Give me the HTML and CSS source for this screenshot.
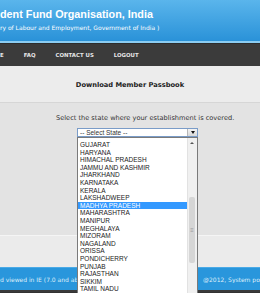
FILE: index.html
```html
<!DOCTYPE html>
<html lang="en">
<head>
    <meta charset="UTF-8">
    <meta name="viewport" content="width=device-width, initial-scale=1.0">
    <title>Download Member Passbook</title>
    <link rel="stylesheet" href="styles.css">
</head>
<body>
    <div class="header">
        <div class="site-title">dent Fund Organisation, India</div>
        <div class="site-sub">ry of Labour and Employment, Government of India )</div>
    </div>

    <div class="nav">
        <span class="nav-item">E</span>
        <span class="nav-item">FAQ</span>
        <span class="nav-item">CONTACT US</span>
        <span class="nav-item">LOGOUT</span>
    </div>

    <div class="page-title">Download Member Passbook</div>

    <div class="content">
        <p class="hint">Select the state where your establishment is covered.</p>
        <div class="select">
            <span class="select-text">-- Select State --</span>
            <span class="select-btn"><span class="arrow"></span></span>

            <div class="dropdown">
                <ul class="options">
                    <li>GUJARAT</li>
                    <li>HARYANA</li>
                    <li>HIMACHAL PRADESH</li>
                    <li>JAMMU AND KASHMIR</li>
                    <li>JHARKHAND</li>
                    <li>KARNATAKA</li>
                    <li>KERALA</li>
                    <li>LAKSHADWEEP</li>
                    <li class="selected">MADHYA PRADESH</li>
                    <li>MAHARASHTRA</li>
                    <li>MANIPUR</li>
                    <li>MEGHALAYA</li>
                    <li>MIZORAM</li>
                    <li>NAGALAND</li>
                    <li>ORISSA</li>
                    <li>PONDICHERRY</li>
                    <li>PUNJAB</li>
                    <li>RAJASTHAN</li>
                    <li>SIKKIM</li>
                    <li>TAMIL NADU</li>
                </ul>
                <div class="scrollbar">
                    <span class="sb-up"></span>
                    <span class="sb-thumb">≡</span>
                    <span class="sb-down"></span>
                </div>
            </div>
        </div>
    </div>

    <div class="band"></div>

    <div class="footer">
        <span>d viewed in IE (7.0 and above</span>
        <span class="footer-right">@2012, System pow</span>
    </div>
    <div class="bottom"></div>
</body>
</html>
```

FILE: styles.css
```css
body {
    margin: 0;
    width: 260px;
    height: 293px;
    overflow: hidden;
    font-family: "DejaVu Sans", Verdana, sans-serif;
    background: #333;
}
.header {
    height: 43px;
    background: linear-gradient(#5ab5ec, #2a92d8);
    border-bottom: 2px solid #8ccdf2;
    color: #fff;
    box-sizing: border-box;
    padding-top: 8px;
}
.site-title {
    font-family: "Liberation Sans", Arial, sans-serif;
    font-weight: bold;
    font-size: 10.8px;
    line-height: 13px;
}
.site-sub {
    font-size: 6px;
    line-height: 7px;
    margin-top: 3px;
}
.nav {
    height: 23px;
    background: #3b3b3b;
    border-top: 1px solid #2d2d2d;
    box-sizing: border-box;
    display: flex;
    align-items: center;
}
.nav-item {
    color: #e6e6e6;
    font-size: 5.4px;
    font-weight: bold;
    margin-right: 20px;
}
.page-title {
    height: 37px;
    background: #ececec;
    border-bottom: 1px solid #d6d6d6;
    display: flex;
    align-items: center;
    justify-content: center;
    font-size: 6.7px;
    font-weight: bold;
    color: #222;
    box-sizing: border-box;
    padding-top: 1px;
}
.content {
    height: 132px;
    background: #e3e3e3;
    padding-top: 11px;
    box-sizing: border-box;
}
.hint {
    margin: 0 0 0 56px;
    font-size: 6.6px;
    line-height: 9px;
    color: #333;
}
.select {
    position: relative;
    margin: 5px 0 0 77px;
    width: 121px;
    height: 9px;
    background: #fff;
    border: 1px solid #7a9cc8;
    box-sizing: border-box;
    display: flex;
    align-items: center;
    font-family: "Liberation Sans", Arial, sans-serif;
    font-size: 6.5px;
    color: #333;
}
.select-text { padding-left: 2px; flex: 1; }
.select-btn {
    width: 9px;
    height: 7px;
    background: linear-gradient(#f4f4f4, #d8d8d8);
    border-left: 1px solid #b8b8b8;
    display: flex;
    align-items: center;
    justify-content: center;
}
.arrow {
    width: 0;
    height: 0;
    border-left: 2.5px solid transparent;
    border-right: 2.5px solid transparent;
    border-top: 3px solid #111;
}
.dropdown {
    position: absolute;
    top: 8px;
    left: -1px;
    width: 121px;
    height: 170px;
    background: #fff;
    border: 1px solid #7a7a7a;
    box-sizing: border-box;
    overflow: hidden;
    display: flex;
}
.options {
    list-style: none;
    margin: 0;
    padding: 3px 0 0;
    flex: 1;
}
.options li {
    height: 7.6px;
    line-height: 7.6px;
    padding-left: 2px;
    font-size: 6.5px;
    color: #222;
}
.options li.selected {
    background: #3399ff;
    color: #fff;
}
.scrollbar {
    width: 9px;
    background: #f0f0f0;
    border-left: 1px solid #e2e2e2;
    position: relative;
}
.sb-up, .sb-down {
    position: absolute;
    left: 2px;
    width: 0;
    height: 0;
    border-left: 2px solid transparent;
    border-right: 2px solid transparent;
}
.sb-up { top: 4px; border-bottom: 2px solid #555; }
.sb-down { bottom: 6px; border-top: 2px solid #555; }
.sb-thumb {
    position: absolute;
    top: 59px;
    left: 1px;
    width: 6px;
    height: 66px;
    background: #d6d6d6;
    border-radius: 2px;
    font-size: 6px;
    color: #999;
    text-align: center;
    line-height: 66px;
}
.band {
    height: 32px;
    background: #ebebeb;
    border-top: 1px solid #f5f5f5;
    box-sizing: border-box;
}
.footer {
    height: 23px;
    background: #2996dc;
    display: flex;
    align-items: center;
    justify-content: space-between;
    font-size: 6px;
    color: #dfeefa;
    border-top: 1px solid #4aaae6;
    box-sizing: border-box;
}
.footer-right { width: 57px; white-space: nowrap; overflow: hidden; }
.bottom {
    height: 2px;
    background: #3a3a3a;
}
```
